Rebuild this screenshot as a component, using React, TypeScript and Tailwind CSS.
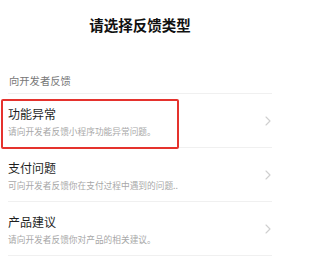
import React from "react";

const items = [
  { title: "功能异常", desc: "请向开发者反馈小程序功能异常问题。", boxed: true },
  { title: "支付问题", desc: "可向开发者反馈你在支付过程中遇到的问题..", boxed: false },
  { title: "产品建议", desc: "请向开发者反馈你对产品的相关建议。", boxed: false },
];

function Chevron() {
  return (
    <svg width="6" height="10" viewBox="0 0 6 10" fill="none">
      <path d="M1 1l4 4-4 4" stroke="#cfcfcf" strokeWidth="1.1" strokeLinecap="round" strokeLinejoin="round" />
    </svg>
  );
}

export default function App() {
  return (
    <div
      className="w-[312px] h-[261px] bg-white overflow-hidden"
      style={{ fontFamily: '"Noto Sans CJK SC", "Noto Sans", sans-serif' }}
    >
      <div className="ml-[8px] w-[264px]">
        <div className="pt-[15px] text-center text-[14.5px] leading-[20px] font-bold text-[#111]">
          请选择反馈类型
        </div>
        <div className="mt-[39px] pl-[1px] text-[10.3px] leading-[14px] text-[#777] pb-[5px]">
          向开发者反馈
        </div>
        <div className="border-t border-[#f0f0f0]">
          {items.map((it) => (
            <div key={it.title} className="relative h-[54px] border-b border-[#f0f0f0] flex items-center">
              {it.boxed && (
                <div className="absolute left-[-7px] top-[5px] w-[178px] h-[50px] border-2 border-[#e5322d] rounded-[2px]" />
              )}
              <div className="flex-1 pt-[12px] h-full">
                <div className="text-[12px] leading-[16px] text-[#1f1f1f]">{it.title}</div>
                <div className="mt-[4px] text-[8.7px] leading-[12px] text-[#a8a8a8] whitespace-nowrap">{it.desc}</div>
              </div>
              <div className="pr-[1px] flex items-center">
                <Chevron />
              </div>
            </div>
          ))}
        </div>
      </div>
    </div>
  );
}
